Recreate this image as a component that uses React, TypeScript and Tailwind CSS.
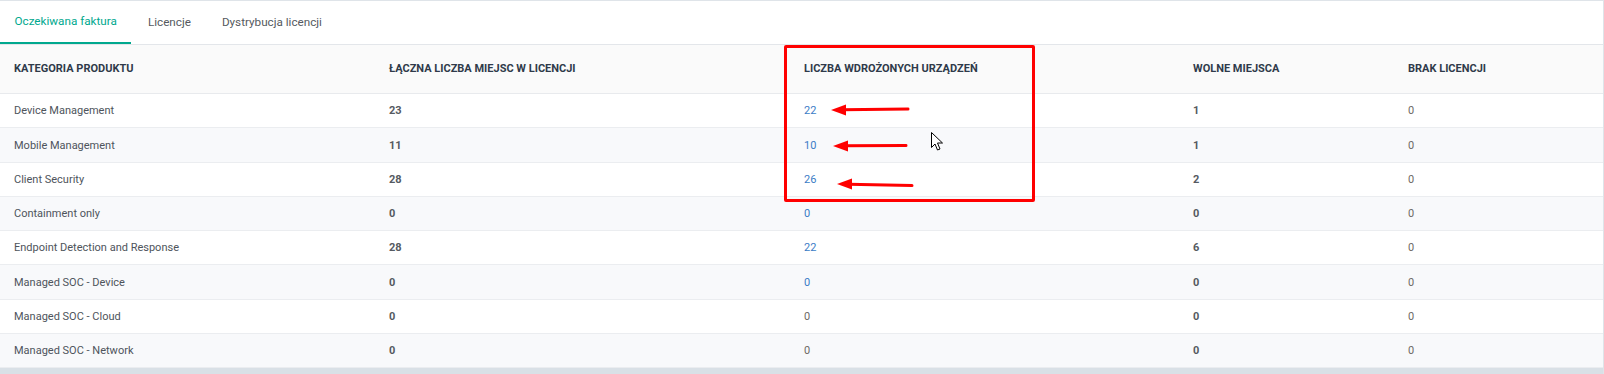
import React from "react";

type Row = {
  name: string;
  total: string;
  deployed: string;
  deployedLink: boolean;
  free: string;
  missing: string;
};

const rows: Row[] = [
  { name: "Device Management", total: "23", deployed: "22", deployedLink: true, free: "1", missing: "0" },
  { name: "Mobile Management", total: "11", deployed: "10", deployedLink: true, free: "1", missing: "0" },
  { name: "Client Security", total: "28", deployed: "26", deployedLink: true, free: "2", missing: "0" },
  { name: "Containment only", total: "0", deployed: "0", deployedLink: true, free: "0", missing: "0" },
  { name: "Endpoint Detection and Response", total: "28", deployed: "22", deployedLink: true, free: "6", missing: "0" },
  { name: "Managed SOC - Device", total: "0", deployed: "0", deployedLink: true, free: "0", missing: "0" },
  { name: "Managed SOC - Cloud", total: "0", deployed: "0", deployedLink: false, free: "0", missing: "0" },
  { name: "Managed SOC - Network", total: "0", deployed: "0", deployedLink: false, free: "0", missing: "0" },
];

const colW = ["w-[375px]", "w-[415px]", "w-[389px]", "w-[215px]", "flex-1"];

export default function App() {
  return (
    <div
      className="relative w-[1604px] h-[374px] overflow-hidden bg-white"
      style={{ fontFamily: "Roboto, 'Liberation Sans', sans-serif" }}
    >
      <div className="flex flex-col border-t border-r border-[#dfe4e9] h-full">
        {/* Tabs */}
        <div className="flex h-[44px] border-b border-[#e3e6ea] gap-[2px]">
          <div className="h-[43px] px-[14.5px] flex items-center border-b-2 border-[#00a88e] text-[11.7px] text-[#00a88e] pt-[1px]">
            Oczekiwana faktura
          </div>
          <div className="h-[43px] px-[14.5px] flex items-center text-[11.7px] text-[#555a60] pt-[1px]">
            Licencje
          </div>
          <div className="h-[43px] px-[14.5px] flex items-center text-[11.7px] text-[#555a60] pt-[1px]">
            Dystrybucja licencji
          </div>
        </div>

        {/* Header */}
        <div className="flex h-[49px] bg-[#fafafa] border-b border-[#e8eaed] items-center text-[11px] font-bold text-[#2f3a4a] uppercase">
          <div className={`${colW[0]} pl-[14px]`}>Kategoria produktu</div>
          <div className={`${colW[1]} pl-[14px]`}>Łączna liczba miejsc w licencji</div>
          <div className={`${colW[2]} pl-[14px]`}>Liczba wdrożonych urządzeń</div>
          <div className={`${colW[3]} pl-[14px]`}>Wolne miejsca</div>
          <div className={`${colW[4]} pl-[14px]`}>Brak licencji</div>
        </div>

        {/* Rows */}
        {rows.map((r, i) => (
          <div
            key={r.name}
            className={`flex h-[34.25px] items-center border-b border-[#ebedf0] text-[11px] pt-[2px] ${
              i % 2 === 1 ? "bg-[#f8f9fb]" : "bg-white"
            }`}
          >
            <div className={`${colW[0]} pl-[14px] text-[#4e545b]`}>{r.name}</div>
            <div className={`${colW[1]} pl-[14px] font-bold text-[#555a61]`}>{r.total}</div>
            <div
              className={`${colW[2]} pl-[14px] ${
                r.deployedLink ? "text-[#3b7cc6]" : "text-[#6e6a64]"
              }`}
            >
              {r.deployed}
            </div>
            <div className={`${colW[3]} pl-[14px] font-bold text-[#555a61]`}>{r.free}</div>
            <div className={`${colW[4]} pl-[14px] text-[#6e6a64]`}>{r.missing}</div>
          </div>
        ))}

        <div className="flex-1 bg-[#d9e0e6]" />
      </div>

      {/* Red annotation box */}
      <div className="absolute left-[784px] top-[45px] w-[251px] h-[157px] border-[3px] border-[#ff0000] rounded-[2px]" />

      {/* Arrows + cursor */}
      <svg
        className="absolute left-0 top-0 pointer-events-none"
        width="1604"
        height="374"
        viewBox="0 0 1604 374"
      >
        <g fill="#ff0000" stroke="#ff0000">
          <line x1="842" y1="109.8" x2="908" y2="109" strokeWidth="3" strokeLinecap="round" />
          <polygon points="831,110 846,104.5 846,115.5" stroke="none" />
          <line x1="844" y1="145.8" x2="906" y2="145.5" strokeWidth="3" strokeLinecap="round" />
          <polygon points="833,146 848,140.5 848,151.5" stroke="none" />
          <line x1="848" y1="184.2" x2="912" y2="185.6" strokeWidth="3" strokeLinecap="round" />
          <polygon points="837,184 852,178.6 852,189.6" stroke="none" />
        </g>
        <g transform="translate(931,132)">
          <path
            d="M0.5 0.5 L0.5 15.5 L4 12 L6.5 18 L9 17 L6.5 11 L11.5 11 Z"
            fill="#ffffff"
            stroke="#000000"
            strokeWidth="1"
            strokeLinejoin="round"
          />
        </g>
      </svg>
    </div>
  );
}
